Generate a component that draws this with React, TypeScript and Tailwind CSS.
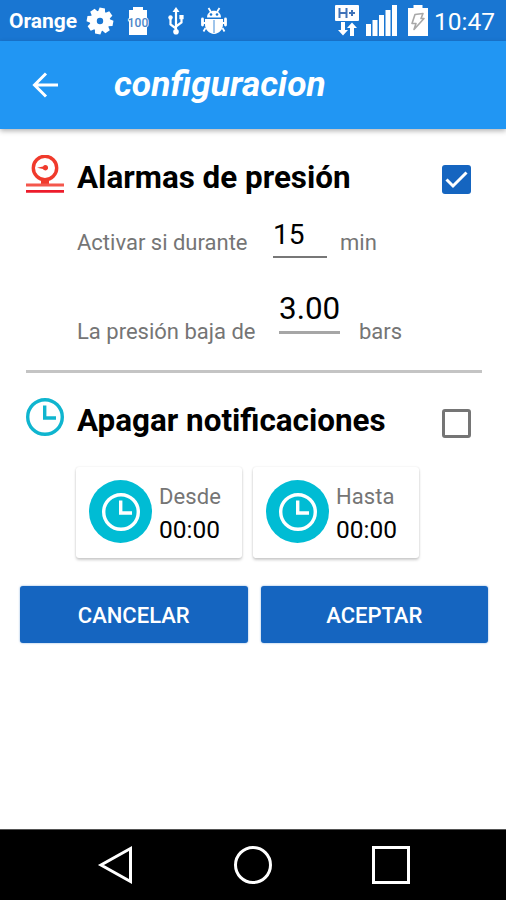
import clsx from "clsx";
import type { ReactNode } from "react";

const GearIcon = () => (
  <svg width="28" height="28" viewBox="-14 -14 28 28" fill="#fff">
    {[10, 55, 100, 145, 190, 235, 280, 325].map((angle) => (
      <path key={angle} d="M-3.8 -8L-2.7 -13.2H2.7L3.8 -8Z" transform={`rotate(${angle})`} />
    ))}
    <circle r="6.7" fill="none" stroke="#fff" strokeWidth="7" />
  </svg>
);

const BatteryFullIcon = () => (
  <svg width="22" height="30" viewBox="0 0 22 30">
    <path d="M6 1H16V4H20V29H2V4H6Z" fill="#fff" />
    <text
      x="11"
      y="20.5"
      textAnchor="middle"
      fontSize="12"
      fontWeight="500"
      fill="#4d86c9"
      stroke="#fff"
      strokeWidth="1.5"
      paintOrder="stroke"
      className="font-[Roboto]"
    >
      100
    </text>
  </svg>
);

const UsbIcon = () => (
  <svg width="16" height="28" viewBox="0 0 16 28" fill="none" stroke="#fff" strokeWidth="2.2">
    <path d="M8 4V24M8 21.5L2.5 17.5V11M8 19.5L13.5 15.5V10" />
    <path d="M8 0L11.5 5H4.5Z" fill="#fff" stroke="none" />
    <circle cx="8" cy="24.8" r="2.8" fill="#fff" stroke="none" />
    <circle cx="2.5" cy="10.5" r="2.2" fill="#fff" stroke="none" />
    <rect x="11.4" y="8" width="4.2" height="4.2" fill="#fff" stroke="none" />
  </svg>
);

const BugdroidIcon = () => (
  <svg width="28" height="28" viewBox="0 0 28 28" fill="#fff">
    <path d="M8.5 1L11 5M19.5 1L17 5" stroke="#fff" strokeWidth="1.8" />
    <path d="M7 10.5C7 1.5 21 1.5 21 10.5Z" />
    <path d="M5 12H23V17C23 23 19 26.5 14 27C9 26.5 5 23 5 17Z" />
    <path d="M2.5 12V18M25.5 12V18" stroke="#fff" strokeWidth="2.8" strokeLinecap="round" />
    <path d="M2.5 16H25.5M5.5 21L3.5 24.5M22.5 21L24.5 24.5" stroke="#fff" strokeWidth="1.8" />
    <path d="M14 13V26" stroke="#6da6e1" strokeWidth="1.3" />
    <circle cx="11" cy="7.5" r="1.3" fill="#1976d2" />
    <circle cx="17" cy="7.5" r="1.3" fill="#1976d2" />
  </svg>
);

const NetworkIcon = () => (
  <svg width="24" height="32" viewBox="0 0 24 32">
    <rect x="0" y="0" width="24" height="16" rx="1" fill="#fff" />
    <path d="M4.5 3V13M11.5 3V13M4.5 8H11.5M14 8H20M17 5V11" stroke="#3f72b8" strokeWidth="2" />
    <path d="M6 17H10V25H13L8 30.5L3 25H6ZM15 31H19V23H22L17 17.5L12 23H15Z" fill="#fff" />
  </svg>
);

const SignalIcon = () => (
  <svg width="31" height="31" viewBox="0 0 31 31" fill="#fff">
    <rect x="0" y="19" width="5" height="12" />
    <rect x="6.5" y="15" width="5" height="16" />
    <rect x="13" y="10" width="5" height="21" />
    <rect x="19.5" y="5" width="5" height="26" />
    <rect x="26" y="0" width="5" height="31" />
  </svg>
);

const ChargingIcon = () => (
  <svg width="20" height="32" viewBox="0 0 20 32">
    <path d="M5.5 0H14.5V3H20V31H0V3H5.5Z" fill="#fff" />
    <path
      d="M7 9.5L15 8.5L13 13.5H16L6 24.5L8 18.5H4Z"
      fill="none"
      stroke="#a8a8a8"
      strokeWidth="1.6"
      strokeLinejoin="round"
    />
  </svg>
);

const GaugeIcon = () => (
  <svg width="38" height="38" viewBox="0 0 38 38" fill="none" stroke="#f03a2c">
    <circle cx="19" cy="13" r="11.7" strokeWidth="3.4" />
    <path d="M11 12.7L17 11.4A2.7 2.7 0 1 1 17 14Z" fill="#f03a2c" stroke="none" />
    <path d="M19 24V30" strokeWidth="8" />
    <path d="M0 30H38" stroke="#f4574c" strokeWidth="3.2" />
    <path d="M0 36.3H38" stroke="#ed1c2b" strokeWidth="2.8" />
  </svg>
);

const ClockIcon = ({ className }: { className?: string }) => (
  <svg viewBox="0 0 38 38" fill="none" stroke="currentColor" className={clsx("size-[38px]", className)}>
    <circle cx="19" cy="19" r="17.3" strokeWidth="3.4" />
    <path d="M18.7 7.5V20H30" strokeWidth="3.4" />
  </svg>
);

const CheckBox = ({ checked }: { checked?: boolean }) => (
  <button
    className={clsx(
      "flex size-[29px] items-center justify-center rounded-[3px]",
      checked ? "bg-[#1565c0]" : "border-[3px] border-[#757575]"
    )}
  >
    {checked && (
      <svg width="29" height="29" viewBox="0 0 29 29" fill="none" stroke="#fff" strokeWidth="3">
        <path d="M4.5 14.5L11 21L24.5 7.5" />
      </svg>
    )}
  </button>
);

const Heading = ({ children }: { children: ReactNode }) => (
  <h2 className="text-[31.4px] leading-[36px] font-bold text-black">{children}</h2>
);

const TimeCard = ({ label, time }: { label: string; time: string }) => (
  <div className="flex h-[91px] w-[166px] rounded-[3px] bg-white pt-[13px] pl-[13px] shadow-[0_2px_3px_rgba(0,0,0,0.2),0_0_2px_rgba(0,0,0,0.1)]">
    <div className="flex size-[63px] items-center justify-center rounded-full bg-[#00bcd4]">
      <ClockIcon className="text-white" />
    </div>
    <div className="ml-[7px] pt-px">
      <div className="text-[22px] leading-[32px] tracking-[0.1px] text-[#757575]">{label}</div>
      <div className="text-[24.5px] leading-[34px] text-black">{time}</div>
    </div>
  </div>
);

const ActionButton = ({ children }: { children: ReactNode }) => (
  <button className="h-[57px] flex-1 rounded-[3px] bg-[#1565c0] pt-[2px] text-[22px] font-medium text-white shadow-[0_0_2px_rgba(21,101,192,0.6)]">
    {children}
  </button>
);

export default function App() {
  return (
    <div className="flex h-[900px] w-[506px] flex-col overflow-hidden bg-white font-[Roboto,sans-serif] whitespace-nowrap">
      <div className="flex h-[41px] shrink-0 items-center bg-[#1976d2] pl-[9px] text-white">
        <span className="w-[77px] pt-[3px] text-[21px] font-bold">Orange</span>
        <GearIcon />
        <div className="ml-[13px]"><BatteryFullIcon /></div>
        <div className="ml-[19px]"><UsbIcon /></div>
        <div className="ml-[16px]"><BugdroidIcon /></div>
        <div className="ml-[107px]"><NetworkIcon /></div>
        <div className="ml-[7px]"><SignalIcon /></div>
        <div className="ml-[11px]"><ChargingIcon /></div>
        <span className="ml-[6px] pt-[3px] text-[24.5px]">10:47</span>
      </div>

      <header className="z-10 flex h-[88px] shrink-0 items-center bg-[#2196f3] pl-[32px] text-white shadow-[0_2px_5px_rgba(0,0,0,0.3)]">
        <svg width="26" height="26" viewBox="0 0 26 26" fill="none" stroke="#fff" strokeWidth="3">
          <path d="M26 13H3M14 1.5L2.5 13L14 24.5" />
        </svg>
        <h1 className="ml-[56px] pb-[3px] text-[35.3px] leading-[40px] font-bold italic">configuracion</h1>
      </header>

      <main className="flex-1">
        <section className="h-[241px] px-[26px] pt-[26px]">
          <div className="flex">
            <GaugeIcon />
            <div className="ml-[13px] pt-[5px]">
              <Heading>Alarmas de presión</Heading>
            </div>
            <div className="mr-[9px] ml-auto pt-[10px]">
              <CheckBox checked />
            </div>
          </div>

          <div className="mt-[22px] flex pl-[51px] text-[22px] leading-[28px] text-[#757575]">
            <span className="w-[196px] pt-[11px]">Activar si durante</span>
            <span className="h-[40px] w-[54px] border-b-2 border-[#777] text-[28px] leading-[34px] text-black">15</span>
            <span className="ml-[13px] pt-[11px]">min</span>
          </div>

          <div className="mt-[34px] flex pl-[51px] text-[22px] leading-[28px] text-[#757575]">
            <span className="w-[202px] pt-[26px]">La presión baja de</span>
            <span className="h-[42px] w-[61px] border-b-[3px] border-[#a6a6a6] text-[31.4px] leading-[34px] text-black">3.00</span>
            <span className="ml-[19px] pt-[26px]">bars</span>
          </div>
        </section>

        <hr className="mr-[24px] ml-[26px] h-[3px] border-0 bg-[#c4c4c4]" />

        <section className="px-[26px] pt-[25px]">
          <div className="flex">
            <ClockIcon className="text-[#0fb5cf]" />
            <div className="ml-[13px] pt-[5px]">
              <Heading>Apagar notificaciones</Heading>
            </div>
            <div className="mr-[9px] ml-auto pt-[11px]">
              <CheckBox />
            </div>
          </div>

          <div className="mt-[28px] flex gap-[11px] pl-[50px]">
            <TimeCard label="Desde" time="00:00" />
            <TimeCard label="Hasta" time="00:00" />
          </div>
        </section>

        <div className="mt-[28px] flex gap-[13px] pr-[18px] pl-[20px]">
          <ActionButton>CANCELAR</ActionButton>
          <ActionButton>ACEPTAR</ActionButton>
        </div>
      </main>

      <nav className="flex h-[71px] shrink-0 items-center justify-between border-t border-[#555] bg-black pr-[95px] pl-[97px]">
        <svg width="36" height="40" viewBox="0 0 36 40" fill="none" stroke="#fff" strokeWidth="3">
          <path d="M33.5 3.5V36.5L4 20Z" />
        </svg>
        <svg width="40" height="40" viewBox="0 0 40 40" fill="none" stroke="#fff" strokeWidth="3">
          <circle cx="21" cy="20" r="17.5" />
        </svg>
        <svg width="40" height="40" viewBox="0 0 40 40" fill="none" stroke="#fff" strokeWidth="3">
          <rect x="2.5" y="2.5" width="35" height="35" />
        </svg>
      </nav>
    </div>
  );
}
